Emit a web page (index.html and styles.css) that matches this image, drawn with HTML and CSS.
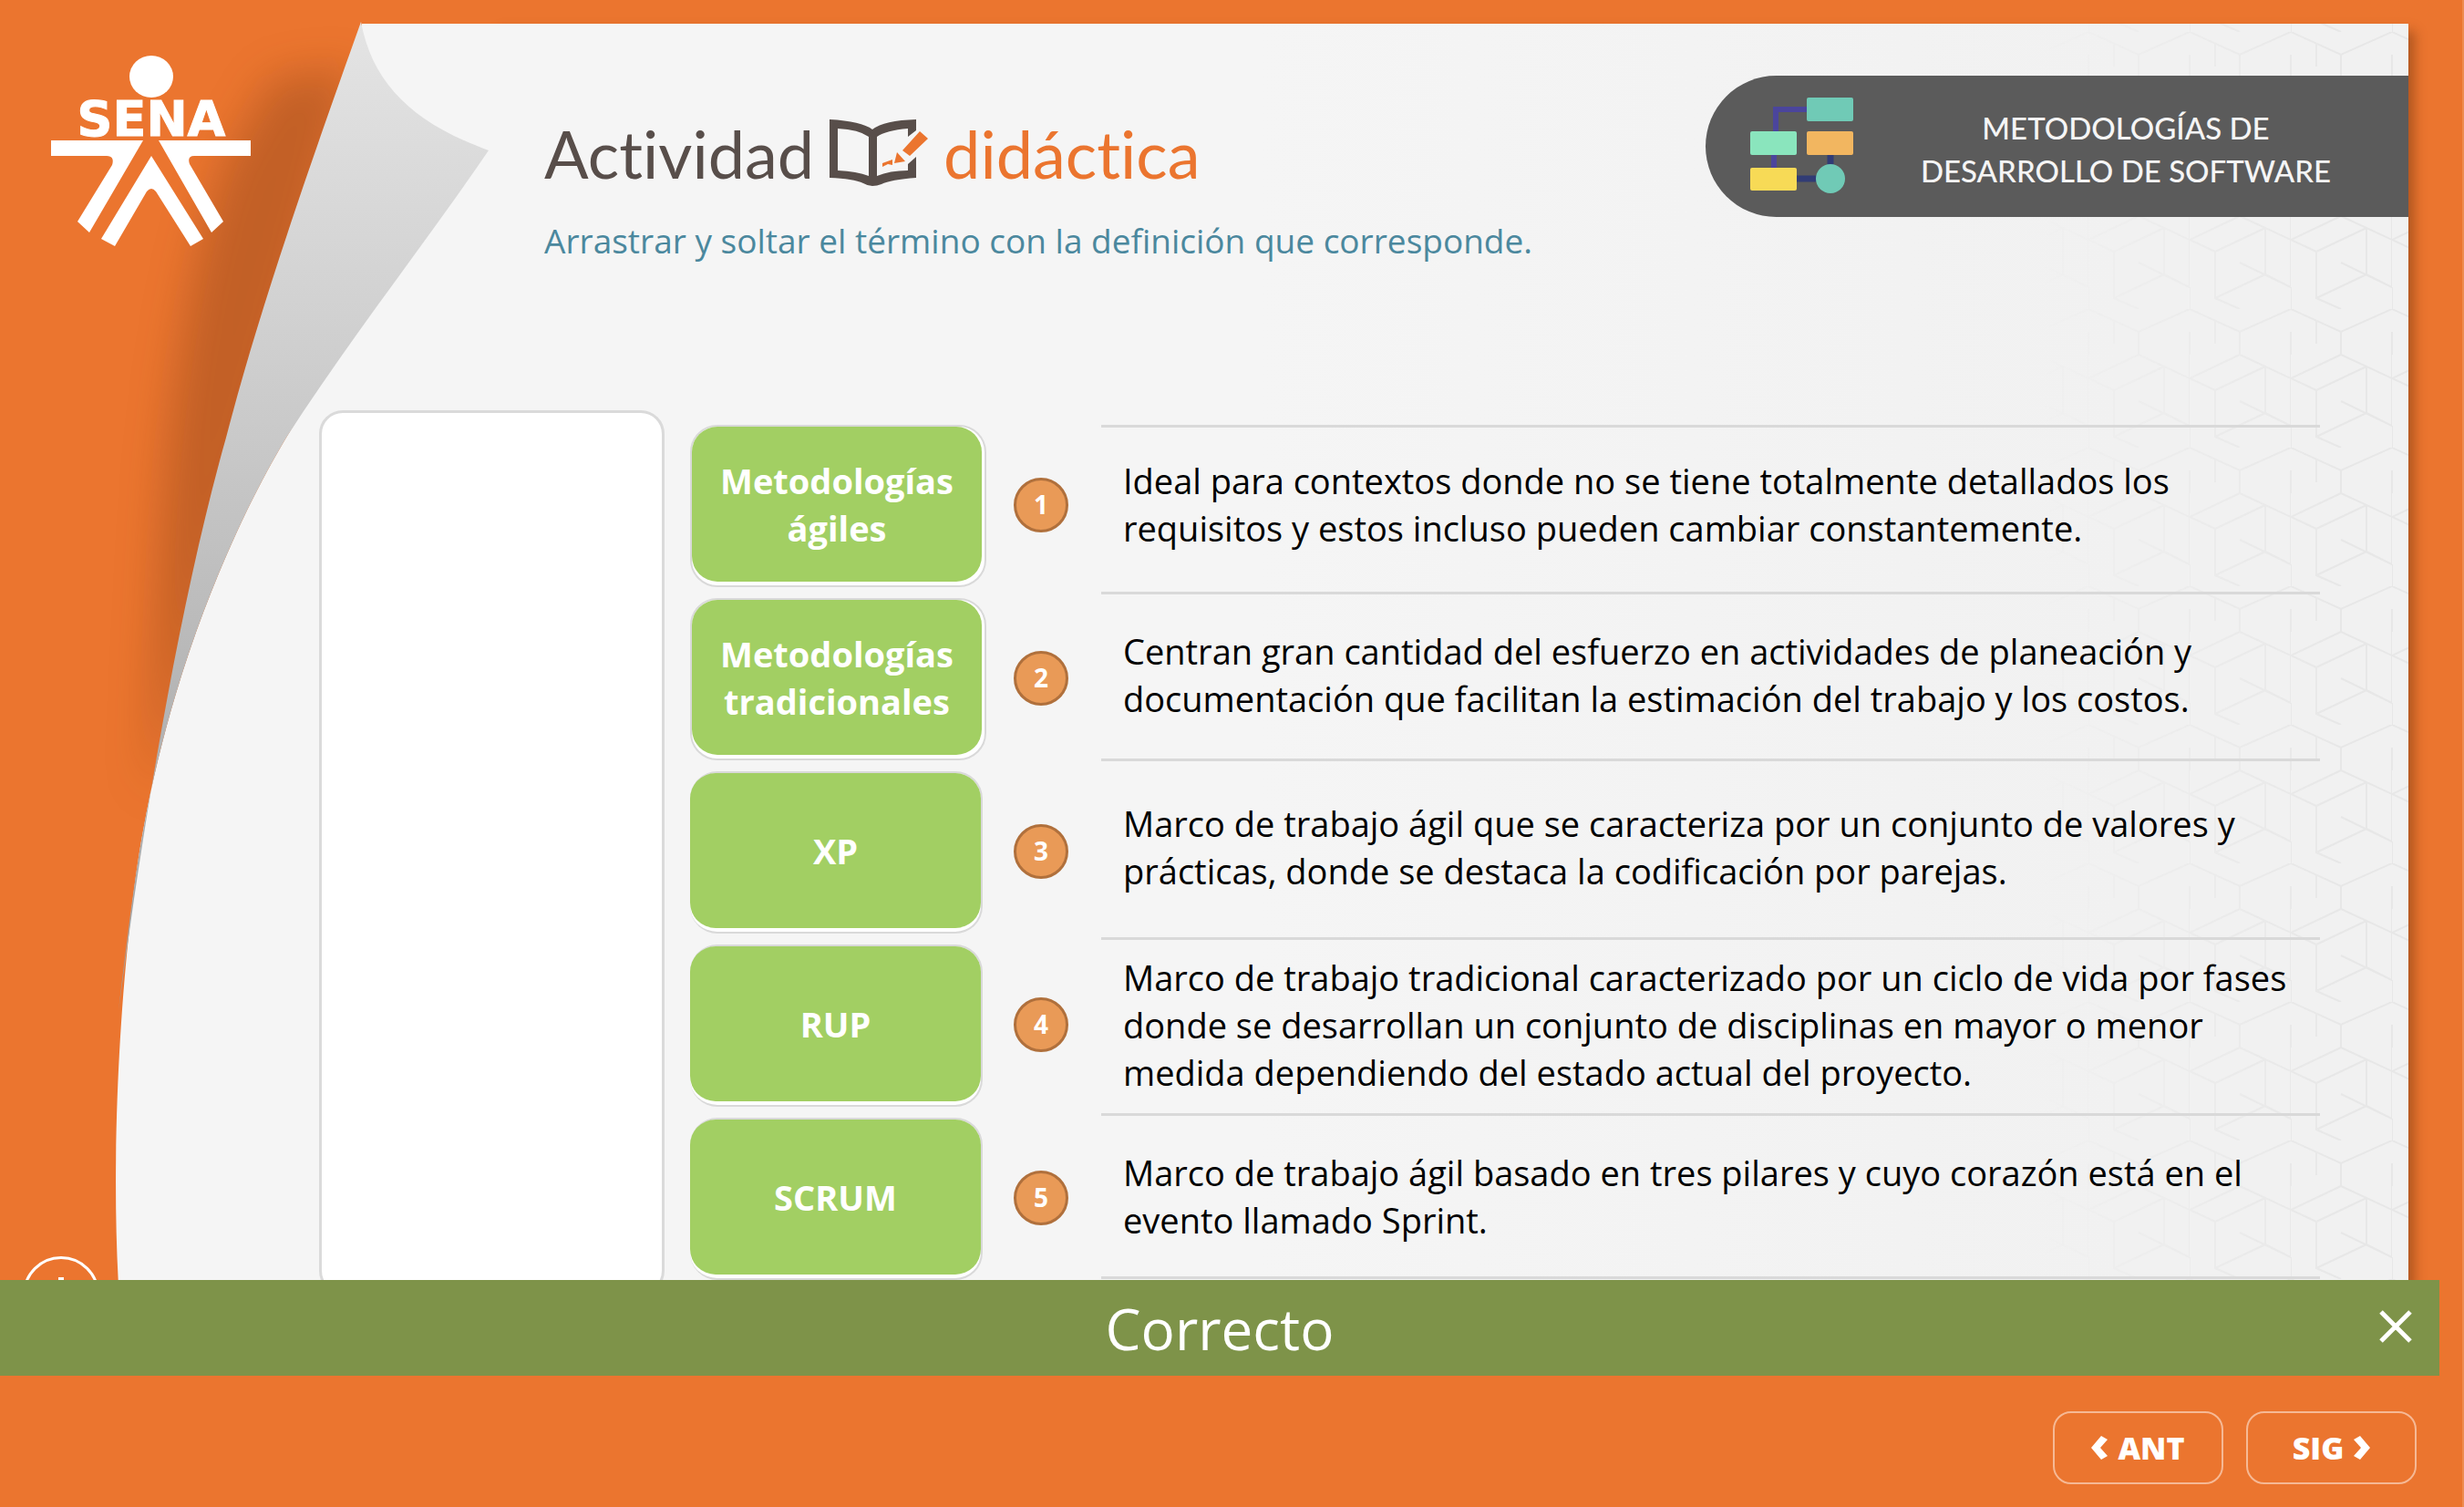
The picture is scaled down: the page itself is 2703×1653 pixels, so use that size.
FILE: index.html
```html
<!DOCTYPE html>
<html lang="es">
<head>
<meta charset="utf-8">
<meta name="viewport" content="width=device-width, initial-scale=1">
<title>Actividad didáctica</title>
<link rel="stylesheet" href="styles.css">
</head>
<body>
<div class="page">
  <main class="stage">
    <div class="paper" aria-hidden="true">
      <svg class="paper-curl" viewBox="0 0 560 1410" width="560" height="1410">
        <defs>
          <linearGradient id="fold" x1="0" y1="0" x2="0" y2="1">
            <stop offset="0" stop-color="#e4e4e4"/>
            <stop offset="0.42" stop-color="#c9c9c9"/>
            <stop offset="0.75" stop-color="#b0b0b0"/>
            <stop offset="1" stop-color="#a0a0a0"/>
          </linearGradient>
          <filter id="soft" x="-50%" y="-20%" width="200%" height="140%"><feGaussianBlur stdDeviation="24"/></filter>
        </defs>
        <path d="M300 85 L390 75 L260 560 L162 880 L176 600 C184 450 205 300 245 180 Z" fill="#7a3a14" opacity="0.36" filter="url(#soft)"/>
        <path d="M397 26 H560 V1410 H130 C120 1230 137 1020 157 911 C195 700 275 545 314 480 L396 345 Z" fill="#f5f5f5"/>
        <path d="M396 24 C409 93 454 135 536 165 C470 262 385 370 314 480 C275 545 195 700 157 911 C148 960 138 1040 130 1109 C160 880 200 650 248 480 C282 350 326 220 396 24 Z" fill="url(#fold)"/>
      </svg>
      <div class="paper-sheet">
        <svg class="paper-pattern" width="100%" height="100%">
          <defs>
            <pattern id="lattice" width="111" height="152" patternUnits="userSpaceOnUse" patternTransform="translate(49 9)">
              <path d="M0 0 L55 25 L111 0 M0 76 L28 89 V140 L55 152 M28 89 L83 63 M55 25 V50 L111 76 V25 M55 50 L0 76 M28 13 V38 M83 63 V114 L28 140 M111 76 V128 L83 114 M0 128 V152 M55 101 L111 128 M0 25 V50" fill="none" stroke="#e7e7e7" stroke-width="2"/>
            </pattern>
          </defs>
          <rect width="100%" height="100%" fill="url(#lattice)"/>
        </svg>
      </div>
    </div>

    <aside class="rail">
      <svg class="logo" viewBox="50 56 232 216" width="232" height="216" role="img" aria-label="SENA">
        <g fill="#fff">
          <ellipse cx="166" cy="84" rx="24" ry="23"/>
          <text class="logo-text" x="166" y="149" text-anchor="middle">SENA</text>
          <path d="M56 154 H157 L98 255 L85 243 L123 181 Q126 171 117 171 H56 Z"/>
          <path d="M275 154 H174 L232 255 L245 243 L208 180 Q205 171 213 171 H275 Z"/>
          <path d="M166 171 L223 262 L209 270 L171 210 Q166 204 161 210 L126 270 L111 262 Z"/>
        </g>
      </svg>
      <button class="info" type="button" aria-label="Información">
        <svg viewBox="0 0 78 78" width="78" height="78"><path d="M36 20 h6 v7 h-6 Z M36 32 h6 v26 h-6 Z" fill="#fff"/></svg>
      </button>
    </aside>

    <div class="content">
      <header class="header">
        <div class="heading">
          <h1 class="title">
            <span>Actividad</span>
            <svg class="book" viewBox="907 130 110 76" width="110" height="76" aria-hidden="true">
              <path fill="#584e4a" fill-rule="evenodd" d="M908 131 Q943 133 955 142 Q968 132 1003 131 V143 L994 150 V141 Q970 143 960 150 V193 Q974 187 994 187 V180 L1003 172 V195 Q975 197 965 202 Q960 204 955 204 Q950 204 945 201 Q934 196 908 195 Z M917 141 V187 Q938 188 951 193 V150 Q940 142 917 141 Z"/>
              <path fill="#eb752f" d="M1007 144 L1016 152 L996 171 L988 165 Z M982 167 L991 177 L979 179 Z M966 179 L977 175 V181 L972 180 L966 183 Z"/>
            </svg>
            <span class="accent">didáctica</span>
          </h1>
          <p class="subtitle">Arrastrar y soltar el término con la definición que corresponde.</p>
        </div>
        <div class="topic">
          <svg class="flow" viewBox="1918 106 118 108" width="118" height="108" aria-hidden="true">
            <path d="M1984 119 H1948 V145 M1946 166 V185" fill="none" stroke="#4b459c" stroke-width="6"/>
            <path d="M2008 166 V182 M1970 195 H1994" fill="none" stroke="#313c75" stroke-width="7"/>
            <rect x="1982" y="106" width="51" height="26" rx="2" fill="#70cab6"/>
            <rect x="1920" y="143" width="51" height="26" rx="2" fill="#8ae5bd"/>
            <rect x="1982" y="143" width="51" height="26" rx="2" fill="#f2b660"/>
            <rect x="1920" y="183" width="51" height="25" rx="2" fill="#f7da56"/>
            <circle cx="2008" cy="195" r="16" fill="#70cab6"/>
          </svg>
          <p class="topic-name">METODOLOGÍAS DE<br>DESARROLLO DE SOFTWARE</p>
        </div>
      </header>

      <section class="activity">
        <div class="bank"></div>
        <div class="slots">
          <div class="slot"><button class="term" type="button">Metodologías ágiles</button></div>
          <div class="slot"><button class="term" type="button">Metodologías tradicionales</button></div>
          <div class="slot snug"><button class="term" type="button">XP</button></div>
          <div class="slot snug"><button class="term" type="button">RUP</button></div>
          <div class="slot snug"><button class="term" type="button">SCRUM</button></div>
        </div>
        <div class="numbers">
          <span class="number">1</span>
          <span class="number">2</span>
          <span class="number">3</span>
          <span class="number">4</span>
          <span class="number">5</span>
        </div>
        <div class="definitions">
          <p class="definition">Ideal para contextos donde no se tiene totalmente detallados los requisitos y estos incluso pueden cambiar constantemente.</p>
          <p class="definition">Centran gran cantidad del esfuerzo en actividades de planeación y documentación que facilitan la estimación del trabajo y los costos.</p>
          <p class="definition">Marco de trabajo ágil que se caracteriza por un conjunto de valores y prácticas, donde se destaca la codificación por parejas.</p>
          <p class="definition">Marco de trabajo tradicional caracterizado por un ciclo de vida por fases donde se desarrollan un conjunto de disciplinas en mayor o menor medida dependiendo del estado actual del proyecto.</p>
          <p class="definition">Marco de trabajo ágil basado en tres pilares y cuyo corazón está en el evento llamado Sprint.</p>
        </div>
      </section>
    </div>
  </main>

  <div class="feedback" role="status">
    <span class="feedback-text">Correcto</span>
    <button class="close" type="button" aria-label="Cerrar">
      <svg viewBox="0 0 36 36" width="36" height="36"><path d="M2 2 L34 34 M34 2 L2 34" stroke="#fff" stroke-width="5"/></svg>
    </button>
  </div>

  <nav class="pager">
    <button class="nav-button" type="button">
      <svg viewBox="0 0 18 26" width="18" height="26"><path d="M11 0 L18 4 L10 13 L18 22 L11 26 L0 13 Z" fill="#fff"/></svg>
      ANT
    </button>
    <button class="nav-button" type="button">
      SIG
      <svg viewBox="0 0 18 26" width="18" height="26"><path d="M7 0 L0 4 L8 13 L0 22 L7 26 L18 13 Z" fill="#fff"/></svg>
    </button>
  </nav>
</div>
</body>
</html>
```
FILE: styles.css
```css
* { box-sizing: border-box; }

body {
  margin: 0;
  background: #eb752f;
  font-family: "Open Sans", sans-serif;
}

button { font-family: inherit; cursor: pointer; }
h1, p { margin: 0; }
svg { display: block; }

.page {
  display: flex;
  flex-direction: column;
  height: 100vh;
  border-right: 2px solid #ee8b4f;
}

.stage {
  position: relative;
  flex: 1;
  min-height: 0;
  display: flex;
  overflow: hidden;
}

/* Paper backdrop behind the activity */
.paper {
  position: absolute;
  inset: 0;
}

.paper-curl {
  position: absolute;
  left: 0;
  top: 0;
  z-index: 1;
}

.paper-sheet {
  position: absolute;
  top: 26px;
  left: 540px;
  right: 59px;
  bottom: -20px;
  background: linear-gradient(to right, #f5f5f5 40%, #f1f1f1 85%);
  box-shadow: 7px 8px 12px rgba(90, 40, 10, 0.4);
}

.paper-pattern {
  position: absolute;
  right: 0;
  top: 0;
  width: 400px;
  -webkit-mask-image: linear-gradient(to right, transparent, #000 80%);
  mask-image: linear-gradient(to right, transparent, #000 80%);
}

.rail {
  position: relative;
  z-index: 2;
  width: 350px;
  flex: none;
  display: flex;
  flex-direction: column;
  justify-content: space-between;
  align-items: flex-start;
  padding-top: 56px;
}

.logo { margin-left: 50px; }

.logo-text {
  font-family: "DejaVu Sans", sans-serif;
  font-weight: 700;
  font-size: 54px;
  stroke: #fff;
  stroke-width: 1px;
}

.info {
  width: 84px;
  height: 84px;
  margin: 0 0 -58px 25px;
  padding: 0;
  border: 3px solid #fff;
  border-radius: 50%;
  background: none;
}

.content {
  position: relative;
  z-index: 2;
  flex: 1;
  min-width: 0;
}

.header {
  display: flex;
  justify-content: space-between;
  height: 450px;
  padding: 83px 59px 0 247px;
}

.title {
  display: flex;
  align-items: center;
  gap: 16px;
  margin-top: 43px;
  font-family: Lato, sans-serif;
  font-weight: 400;
  font-size: 72px;
  line-height: 84px;
  font-variant-ligatures: none;
  color: #584e4a;
}

.accent { color: #eb752f; }

.subtitle {
  margin-top: 28px;
  font-size: 37px;
  line-height: 52px;
  color: #4b889e;
}

.topic {
  display: flex;
  align-items: center;
  justify-content: space-between;
  flex: none;
  width: 771px;
  height: 155px;
  padding: 0 85px 0 47px;
  border-radius: 78px 0 0 78px;
  background: #5b5b5b;
}

.topic-name {
  padding-top: 6px;
  font-family: Lato, sans-serif;
  font-weight: 500;
  font-size: 33px;
  line-height: 47px;
  color: #f5f5f5;
  text-align: center;
}

.activity {
  display: flex;
  align-items: flex-start;
  padding-right: 156px;
}

.bank {
  flex: none;
  width: 379px;
  height: 970px;
  margin-right: 28px;
  border: 3px solid #dadada;
  border-radius: 26px;
  background: #fff;
}

.slots {
  flex: none;
  display: grid;
  gap: 12px;
  width: 325px;
  margin: 16px 30px 0 0;
}

.slot {
  height: 178px;
  padding: 0 3px 4px 0;
  border: 2px solid #d9d9d9;
  border-radius: 30px;
  background: #fff;
}

.slot.snug {
  width: 321px;
  padding-right: 0;
  border-left-width: 0;
}

.term {
  width: 100%;
  height: 100%;
  padding: 0 12px;
  border: 0;
  border-radius: 28px;
  background: #a2cf63;
  color: #fff;
  font-weight: 700;
  font-size: 38px;
  line-height: 52px;
}

.numbers {
  flex: none;
  display: grid;
  gap: 130px;
  margin: 74px 36px 0 0;
}

.number {
  width: 60px;
  height: 60px;
  border: 3px solid #b0703c;
  border-radius: 50%;
  background: #e99a57;
  color: #fff;
  font-weight: 700;
  font-size: 28px;
  line-height: 52px;
  text-align: center;
}

.definitions {
  flex: 1;
  display: grid;
  grid-template-rows: 183px 183px 196px 193px 179px;
  margin-top: 16px;
  border-bottom: 3px solid #d9d9d9;
}

.definition {
  display: flex;
  align-items: center;
  padding: 0 12px 5px 24px;
  border-top: 3px solid #d9d9d9;
  font-size: 38px;
  line-height: 52px;
  color: #000;
}

.definition:first-child { padding-bottom: 12px; }
.definition:last-child { padding-bottom: 0; }

.feedback {
  position: relative;
  flex: none;
  display: flex;
  align-items: center;
  justify-content: center;
  height: 105px;
  margin-right: 25px;
  background: #7e9349;
}

.feedback-text {
  color: #fff;
  font-size: 62px;
  line-height: 84px;
}

.close {
  position: absolute;
  right: 20px;
  top: 23px;
  padding: 10px;
  border: 0;
  background: none;
}

.pager {
  flex: none;
  display: flex;
  justify-content: flex-end;
  gap: 25px;
  height: 144px;
  padding: 39px 50px 25px 0;
}

.nav-button {
  display: flex;
  align-items: center;
  justify-content: center;
  gap: 11px;
  width: 187px;
  border: 2px solid #f6b995;
  border-radius: 20px;
  background: none;
  color: #fff;
  font-weight: 800;
  font-size: 34px;
  line-height: 48px;
}
```
